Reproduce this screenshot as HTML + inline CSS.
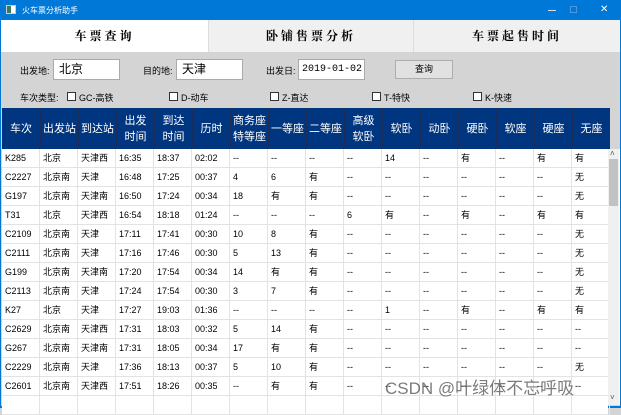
<!DOCTYPE html>
<html><head><meta charset="utf-8"><style>
*{margin:0;padding:0;box-sizing:border-box}
body{width:621px;height:408px;overflow:hidden;background:#d4d4d4;font-family:"Liberation Sans","Noto Sans CJK SC",sans-serif;position:relative;font-size:9px;color:#000}
.a{position:absolute}
#title{left:0;top:0;width:621px;height:20px;background:#0078d7;color:#fff;font-size:9px}
.tab{top:20px;height:32px;background:#f0f0f0;font-family:"Noto Serif CJK SC","Liberation Serif",serif;font-weight:bold;font-size:12px;text-align:center;line-height:32px;letter-spacing:3px;border-left:1px solid #ddd}
.inp{background:#fff;border:1px solid #aaa;height:21px;font-size:12px;line-height:19px;padding-left:5px;white-space:nowrap;overflow:hidden}
.lbl{font-size:9px}
.cb{width:9px;height:9px;border:1px solid #333;background:#fff}
#hdr{left:2px;top:108px;width:608px;height:41px;background:#003580}
.h{top:0;height:41px;width:38px;color:#fff;font-size:11px;display:flex;align-items:center;justify-content:center;text-align:center;line-height:16px;border-left:1px solid #1a2c5a}
.row{left:2px;width:606px;height:19px;background:#fff;border-bottom:1px solid #e3e3e3}
.c{top:0;height:19px;width:38px;border-right:1px solid #e3e3e3;line-height:18px;padding-left:3px;font-size:9px;white-space:nowrap;overflow:hidden}
</style></head><body>
<div class="a" id="title">
<div class="a" style="left:6px;top:5px;width:10px;height:9px;background:#fff;border:1px solid #ccc"><div style="width:4px;height:7px;background:#3a7a5a"></div></div>
<div class="a" style="left:22px;top:5px;font-size:8px">火车票分析助手</div>
<div class="a" style="left:548px;top:10px;width:8px;height:1px;background:#cfe3f7"></div>
<div class="a" style="left:570px;top:6px;width:7px;height:7px;border:1px solid #4a98e0"></div>
<div class="a" style="left:600px;top:4px;font-size:10px">✕</div>
</div>
<div class="a" style="left:0;top:20px;width:1px;height:388px;background:#0078d7"></div>
<div class="a" style="left:620px;top:20px;width:1px;height:388px;background:#0078d7"></div>
<div class="a" style="left:0;top:406px;width:621px;height:2px;background:#0078d7"></div>
<div class="a tab" style="left:1px;width:207px;background:#fff;border:none">车票查询</div>
<div class="a tab" style="left:208px;width:205px">卧铺售票分析</div>
<div class="a tab" style="left:413px;width:207px">车票起售时间</div>

<div class="a lbl" style="left:20px;top:64px">出发地:</div>
<div class="a inp" style="left:53px;top:59px;width:67px">北京</div>
<div class="a lbl" style="left:143px;top:64px">目的地:</div>
<div class="a inp" style="left:176px;top:59px;width:67px">天津</div>
<div class="a lbl" style="left:266px;top:64px">出发日:</div>
<div class="a inp" style="left:298px;top:59px;width:67px;font-family:'Liberation Mono',monospace;font-size:10px;padding-left:3px">2019-01-02</div>
<div class="a" style="left:395px;top:60px;width:58px;height:19px;background:#e1e1e1;border:1px solid #adadad;text-align:center;line-height:17px">查询</div>
<div class="a lbl" style="left:20px;top:91px">车次类型:</div>
<div class="a cb" style="left:67px;top:92px"></div><div class="a lbl" style="left:79px;top:91px">GC-高铁</div>
<div class="a cb" style="left:169px;top:92px"></div><div class="a lbl" style="left:181px;top:91px">D-动车</div>
<div class="a cb" style="left:270px;top:92px"></div><div class="a lbl" style="left:282px;top:91px">Z-直达</div>
<div class="a cb" style="left:372px;top:92px"></div><div class="a lbl" style="left:384px;top:91px">T-特快</div>
<div class="a cb" style="left:473px;top:92px"></div><div class="a lbl" style="left:485px;top:91px">K-快速</div>

<div class="a" id="hdr">
<div class="a h" style="left:0;border:none">车次</div>
<div class="a h" style="left:38px">出发站</div>
<div class="a h" style="left:76px">到达站</div>
<div class="a h" style="left:114px">出发<br>时间</div>
<div class="a h" style="left:152px">到达<br>时间</div>
<div class="a h" style="left:190px">历时</div>
<div class="a h" style="left:228px">商务座<br>特等座</div>
<div class="a h" style="left:266px">一等座</div>
<div class="a h" style="left:304px">二等座</div>
<div class="a h" style="left:342px">高级<br>软卧</div>
<div class="a h" style="left:380px">软卧</div>
<div class="a h" style="left:418px">动卧</div>
<div class="a h" style="left:456px">硬卧</div>
<div class="a h" style="left:494px">软座</div>
<div class="a h" style="left:532px">硬座</div>
<div class="a h" style="left:570px">无座</div>
</div>
<div class="a" style="left:2px;top:149px;width:618px;height:256px;background:#fff"></div>
<div id="rows"></div>
<div class="a" style="left:608px;top:149px;width:11px;height:256px;background:#f0f0f0"></div>
<div class="a" style="left:610px;top:149px;font-size:8px;color:#555">˄</div>
<div class="a" style="left:609px;top:159px;width:9px;height:47px;background:#c2c2c2"></div>
<div class="a" style="left:610px;top:393px;font-size:8px;color:#555">˅</div>
<div class="a" style="left:385px;top:374px;font-size:17px;color:rgba(90,90,90,.8)">CSDN @叶绿体不忘呼吸</div>
<script>
var d=[
"K285 北京 天津西 16:35 18:37 02:02 -- -- -- -- 14 -- 有 -- 有 有",
"C2227 北京南 天津 16:48 17:25 00:37 4 6 有 -- -- -- -- -- -- 无",
"G197 北京南 天津南 16:50 17:24 00:34 18 有 有 -- -- -- -- -- -- 无",
"T31 北京 天津西 16:54 18:18 01:24 -- -- -- 6 有 -- 有 -- 有 有",
"C2109 北京南 天津 17:11 17:41 00:30 10 8 有 -- -- -- -- -- -- 无",
"C2111 北京南 天津 17:16 17:46 00:30 5 13 有 -- -- -- -- -- -- 无",
"G199 北京南 天津南 17:20 17:54 00:34 14 有 有 -- -- -- -- -- -- 无",
"C2113 北京南 天津 17:24 17:54 00:30 3 7 有 -- -- -- -- -- -- 无",
"K27 北京 天津 17:27 19:03 01:36 -- -- -- -- 1 -- 有 -- 有 有",
"C2629 北京南 天津西 17:31 18:03 00:32 5 14 有 -- -- -- -- -- -- --",
"G267 北京南 天津南 17:31 18:05 00:34 17 有 有 -- -- -- -- -- -- --",
"C2229 北京南 天津 17:36 18:13 00:37 5 10 有 -- -- -- -- -- -- 无",
"C2601 北京南 天津西 17:51 18:26 00:35 -- 有 有 -- -- -- -- -- -- --",
"  "];
var h="";
d.forEach(function(r,i){var c=r.split(" ");h+='<div class="a row" style="top:'+(149+i*19)+'px">';
for(var j=0;j<16;j++){h+='<div class="a c" style="left:'+(j*38)+'px">'+(c[j]||"")+'</div>';}h+='</div>';});
document.getElementById("rows").innerHTML=h;
</script>
</body></html>
